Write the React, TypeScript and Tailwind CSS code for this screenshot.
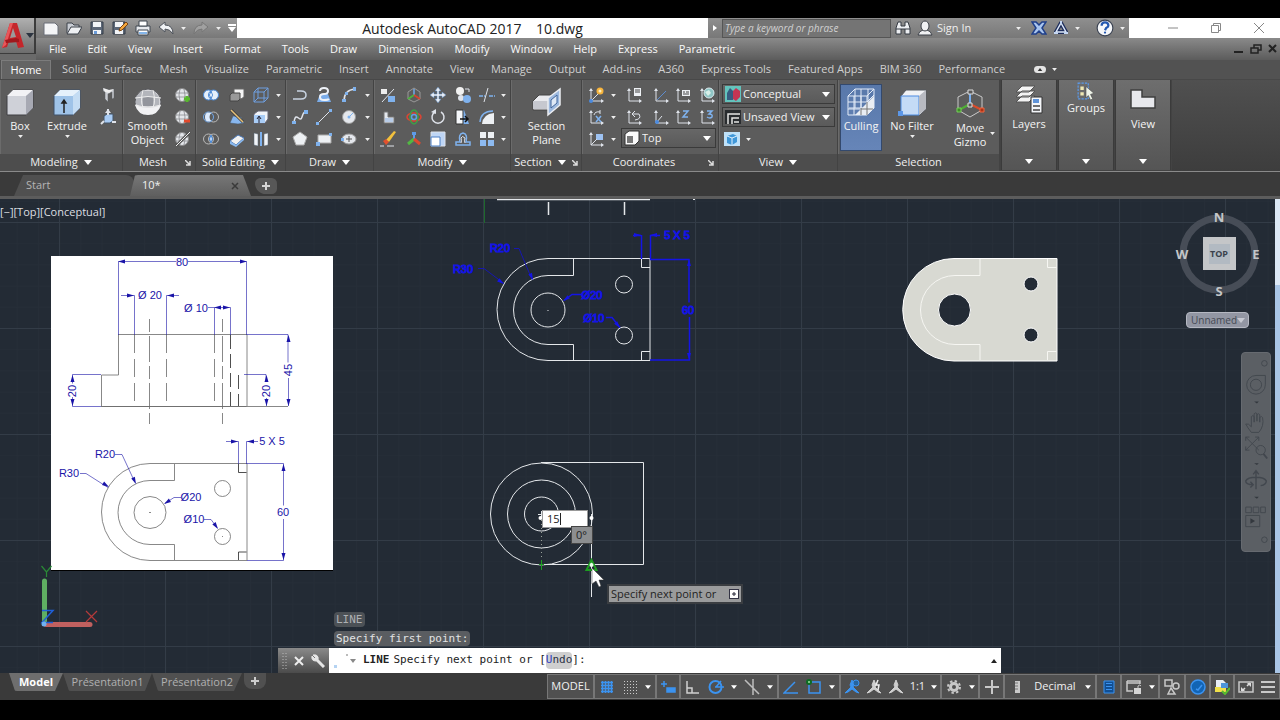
import type { ReactNode } from "react";

const light = "#dfe3ea";
const blue = "#7fb2ee";
const glow = "#3b93f0";

const axes = (
  <>
    <path d="M3 2v12h12" fill="none" stroke={light} />
    <path d="M1 4l2-3 2 3zM13 12l3 2-3 2z" fill={light} />
  </>
);

const sphere = (
  <>
    <circle cx="7" cy="8" r="6.500" fill="#e4e6ea" stroke="#8a8a8a" />
    <path d="M1 6h12M1 10h12M5 2q-2 6 0 12M9 2q2 6 0 12" fill="none" stroke="#8b8d92" strokeWidth=".8" />
  </>
);

const person = (color: string) => (
  <path d="M8 1l2 5-1 2 6 6-3-1-4-3-4 3-3 1 6-6-1-2z" fill={color} stroke={color} />
);

const icons: Record<string, ReactNode> = {
  newFile: <path d="M1 3h11l3 3v9H1z" fill="#f4f5f7" stroke="#6b6f78" />,
  open: (
    <>
      <path d="M1 13V3h5l2 2h5v3" fill="#c9cdd4" stroke="#3d424b" />
      <path d="M1 14l4-7h11l-4 7z" fill="#eef0f3" stroke="#3d424b" />
    </>
  ),
  save: (
    <>
      <path d="M2 2h12v12H2z" fill="#5d6878" stroke="#343c48" />
      <path d="M4 2h8v5H4zM4 10h8v4H4z" fill="#f2f4f7" />
      <path d="M5 11h3v3H5z" fill="#6a9bd8" />
    </>
  ),
  saveAs: (
    <>
      <path d="M1 2h12v12H1z" fill="#5d6878" stroke="#343c48" />
      <path d="M3 2h8v5H3zM3 10h8v4H3z" fill="#f2f4f7" />
      <path d="M7 11l1-3 6-6 2 2-6 6z" fill="#f3a63c" stroke="#7a4413" />
    </>
  ),
  print: (
    <>
      <path d="M1 6h14v6H1z" fill="#e8eaee" stroke="#3f4650" />
      <path d="M4 1h8v5H4zM3 10h10v5H3z" fill="#fff" stroke="#3f4650" />
      <path d="M4 12h8v2H4z" fill="#85b6ea" />
    </>
  ),
  undo: <path d="M1 7l6-5v3q8 0 8 9-3-5-8-5v3z" fill="#f0f2f5" stroke="#50555d" />,
  redo: <path d="M15 7L9 2v3q-8 0-8 9 3-5 8-5v3z" fill="#a0a0a0" stroke="#777" />,
  binoculars: (
    <>
      <path d="M3 2h3v4h4V2h3l2 6v6h-5V9H6v5H1V8z" fill="#eceef1" stroke="#353a42" />
      <path d="M1 9h5M10 9h5" stroke="#353a42" />
    </>
  ),
  user: (
    <>
      <path d="M1 15q1-4 5-5h4q4 1 5 5z" fill="#f0f1f3" stroke="#3c4048" />
      <ellipse cx="8" cy="6" rx="4" ry="5" fill="#f0f1f3" stroke="#3c4048" />
    </>
  ),
  exchange: <path d="M1 2h4l3 3 3-3h4l-4 6 4 6h-4l-3-3-3 3H1l4-6z" fill="#a9c5ef" stroke="#1f3f8a" strokeWidth="1.500" />,
  a360: (
    <>
      <path d="M8 3l5 9H3z" fill="none" stroke="#1d2d5c" strokeWidth="4" strokeLinejoin="round" />
      <path d="M8 3l5 9H3z" fill="none" stroke="#dce7f8" strokeWidth="1.500" />
      <path d="M1 13h4M11 13h4M8 1v3" stroke="#c3d6f3" strokeWidth="2" />
    </>
  ),
  help: (
    <>
      <circle cx="8" cy="8" r="7" fill="#f5f7fa" stroke="#3a4252" />
      <path d="M5 6q0-3 3-3t3 3q0 1-2 2l-1 2" fill="none" stroke="#2458b0" strokeWidth="2" />
      <circle cx="8" cy="12" r="1" fill="#2458b0" />
    </>
  ),
  polysolid: (
    <>
      <path d="M3 1l6 2 5-1v9l-2 1V5L8 7v8l-3-3V5L3 4z" fill="#c9ccd1" stroke="#55585d" strokeWidth=".5" />
      <path d="M3 1l6 2 5-1-5 4-4-1z" fill="#eee" />
    </>
  ),
  presspull: (
    <>
      <path d="M4 7l3-2h6v7l-3 2H4z" fill="#a8cbf4" stroke="#456" />
      <path d="M8 0v6M1 15l3-3M12 13h4" stroke={light} strokeWidth="2" />
      <path d="M5 4l3-4 3 4z" fill={light} />
    </>
  ),
  smoothMore: <>{sphere}<path d="M12 9v6M9 12h6" stroke="#57b92c" strokeWidth="3" /></>,
  smoothLess: <>{sphere}<path d="M9 12h6" stroke="#e2492c" strokeWidth="3" /></>,
  refine: <>{sphere}<path d="M1 15L15 1" stroke="#555" strokeWidth="3" /><path d="M1 15L15 1" stroke="#eee" /></>,
  union: (
    <>
      <circle cx="5.500" cy="8" r="5" fill="#e5effb" stroke="#4787d6" />
      <circle cx="10.500" cy="8" r="5" fill="#e5effb" stroke="#4787d6" />
      <path d="M8 4q-3 4 0 8 3-4 0-8" fill="#fff" stroke="#4787d6" />
    </>
  ),
  subtract: (
    <>
      <circle cx="10.500" cy="8" r="5" fill="none" stroke="#bbb" />
      <circle cx="5.500" cy="8" r="5" fill="none" stroke="#6fa8ec" />
      <path d="M8 4q-3 4 0 8-6 2-6-4t6-4" fill="#dcebff" />
    </>
  ),
  intersect: (
    <>
      <circle cx="5.500" cy="8" r="5" fill="none" stroke="#bbb" />
      <circle cx="10.500" cy="8" r="5" fill="none" stroke="#bbb" />
      <path d="M8 4q-3 4 0 8 3-4 0-8" fill="#d2e5ff" stroke="#4787d6" />
    </>
  ),
  interfere: (
    <>
      <path d="M5 2h10v8l-3 2H5z" fill="#f5f5f5" stroke="#666" />
      <path d="M1 8l2-2h8v6l-2 2H1z" fill="#999" stroke="#444" />
    </>
  ),
  slice: (
    <>
      <path d="M1 14l3-7 8 1 3 6-6 1z" fill="#88b7ef" stroke="#456" strokeWidth=".5" />
      <path d="M2 1l12 12" stroke="#3b3b3b" strokeWidth="3" />
      <path d="M2 1l12 12" stroke="#e8c27a" strokeWidth="1.500" />
    </>
  ),
  thicken: (
    <>
      <path d="M1 10l8-6 6 3-8 7z" fill="#f2f2f2" stroke="#4b78b5" />
      <path d="M1 10v3l6 3 8-7V7l-8 7z" fill="#8abaf1" />
    </>
  ),
  wireCube: <path d="M1 5h10v10H1zM5 1h10v10H5zM1 5l4-4M11 5l4-4M1 15l4-4M11 15l4-4" fill="none" stroke="#6f9fe0" />,
  faceCube: (
    <>
      <path d="M1 5l4-3h10v8l-3 4H1z" fill="#f1f4f8" stroke="#667" />
      <path d="M1 6h11v8H1z" fill="#a9cdf7" />
      <path d="M6 14V8M4 10l2-3 2 3" fill="none" stroke="#223" />
    </>
  ),
  mirror3d: (
    <>
      <path d="M1 2l4 1v12l-4-1zM15 2l-4 1v12l4-1z" fill="#f2f5f9" stroke="#567" strokeWidth=".5" />
      <path d="M8 1v14" stroke={blue} strokeWidth="2" />
    </>
  ),
  polyline: <path d="M1 12h8q5 0 5-4t-5-4H5M1 12h4" fill="none" stroke="#c9d4e2" strokeWidth="1.500" />,
  helix: (
    <>
      <path d="M4 7h8l3 8H1z" fill="#7badea" />
      <path d="M4 4q0-3 4-3t4 3-4 3-4 3 4 3 5-1" fill="none" stroke="#eef2f8" strokeWidth="2" />
    </>
  ),
  arc: (
    <>
      <path d="M3 14Q3 3 14 2" fill="none" stroke={light} strokeWidth="1.500" />
      <path d="M1 12h4v3H1zM12 0h3v4h-3zM4 5h3v3H4z" fill={blue} />
    </>
  ),
  spline: (
    <>
      <path d="M2 13C4 1 8 15 10 8S13 4 14 3" fill="none" stroke={light} strokeWidth="1.500" />
      <path d="M0 12h4v3H0zM12 1h4v4h-4z" fill={blue} />
    </>
  ),
  line: <><path d="M2 14L14 2" stroke={light} /><path d="M0 13h3v3H0zM13 0h3v3h-3z" fill={blue} /></>,
  circle: <><circle cx="8" cy="8" r="6.500" fill="#e4e7ec" stroke="#999" /><path d="M8 8l4-4" stroke={blue} /><circle cx="8" cy="8" r="1.500" fill={blue} /></>,
  polygon: <path d="M8 1l7 5-3 8H4L1 6z" fill="#edf0f3" stroke="#aaa" />,
  rectangle: <><path d="M2 4h13v8H2z" fill="#edf0f3" stroke="#aaa" /><path d="M0 11h4v4H0zM13 2h3v3h-3z" fill={blue} /></>,
  ellipse: <><ellipse cx="8" cy="8" rx="7" ry="5" fill="#e4e7ec" stroke="#999" /><path d="M5 8h6M8 5v6" stroke="#555" /><path d="M0 7h3v3H0z" fill={blue} /></>,
  align: <><path d="M1 2h6v5H1z" fill="#eee" /><path d="M2 15L14 2" stroke={light} /><path d="M8 9h7v6H8z" fill={blue} /></>,
  gizmo: <><path d="M8 1l6 4v7l-6 3-6-3V5z" fill="none" stroke="#999" /><path d="M8 2v6" stroke="#6fa8ec" strokeWidth="1.500" /><path d="M8 8l-6 4" stroke="#4db33c" strokeWidth="2" /><path d="M8 8l6 4" stroke="#d3452e" strokeWidth="2" /></>,
  move: <path d="M8 0l3 4H9v3h3V5l4 3-4 3V9H9v3h2l-3 4-3-4h2V9H4v2L0 8l4-3v2h3V4H5z" fill="#e7ecf4" stroke="#5684bb" strokeWidth=".5" />,
  copy: <><circle cx="5" cy="4" r="4" fill="#f2f2f2" /><circle cx="6" cy="11" r="3" fill={light} /><circle cx="12" cy="12" r="4" fill={blue} /><path d="M10 2h4v3" fill="none" stroke={light} /></>,
  trim: <><path d="M0 9h6M10 9h6" stroke={blue} strokeWidth="1.500" strokeDasharray="4 1" /><path d="M5 15L9 1" stroke={light} /></>,
  lShape: <><path d="M4 3h4v5h6v6H4z" fill="#e4e8ee" stroke="#777" /><path d="M5 9h8v4H5z" fill="#b8cce8" /></>,
  rotate3d: <><ellipse cx="8" cy="8" rx="7" ry="4" fill="none" stroke="#df4432" strokeWidth="1.500" /><ellipse cx="8" cy="8" rx="4" ry="7" fill="none" stroke="#3f9e46" strokeWidth="1.500" /><circle cx="8" cy="8" r="2.500" fill="none" stroke="#619ee3" strokeWidth="1.500" /></>,
  rotate: <><path d="M5 3a6 6 0 1 0 6 0" fill="none" stroke={light} strokeWidth="1.500" /><path d="M6 0v5l-5-2z" fill={light} /></>,
  stretch: <><path d="M1 1h8l5 14H1z" fill={blue} /><path d="M1 1h7v14H1z" fill="#f5f7fa" stroke="#333" /><path d="M5 10h7M10 7l3 3-3 3" fill="none" stroke="#111" strokeWidth="1.500" /></>,
  fillet: <><path d="M3 15Q4 5 15 4v11z" fill="#edf0f3" /><path d="M1 13Q2 2 14 2" fill="none" stroke={blue} strokeWidth="1.500" /></>,
  erase: <><path d="M6 9l8-9 2 1-7 10z" fill="#f2c13d" /><path d="M3 10l3-2 3 3-3 3z" fill="#e2512e" /><path d="M0 15h4M7 15h7" stroke={light} /></>,
  scale3d: <><path d="M8 8V3" stroke="#5e9be8" strokeWidth="2" /><path d="M8 8l-6 5" stroke="#52b843" strokeWidth="3" /><path d="M8 8l6 5" stroke="#dc4930" strokeWidth="3" /><path d="M6 1h4v3H6z" fill="#5e9be8" /></>,
  scale: <><path d="M1 1h14v14H1z" fill="#bfd6f5" stroke={light} /><path d="M1 6h9v9H1z" fill="#fff" stroke="#4a7ec4" /></>,
  offset: <><path d="M1 14h14v-3h-4q2-8-3-9-5 1-3 9H1z" fill="none" stroke={blue} strokeWidth="1.500" /><path d="M6 12q1-2 0-5 1-3 4 0-1 3 0 5" fill="none" stroke={light} /></>,
  array: <><path d="M1 1h6v6H1zM9 1h6v6H9z" fill="#edf0f4" /><path d="M1 9h6v6H1zM9 9h6v6H9z" fill="#8dbaf0" /></>,
  ucs: <>{axes}<path d="M3 14l8-8" stroke={light} /><circle cx="12" cy="4" r="3.500" fill="#f7b43c" /><circle cx="12" cy="4" r="1.500" fill="#fff1c0" /><circle cx="3" cy="14" r="2" fill="#4b8be0" /></>,
  ucsWorldX: <>{axes}<path d="M6 6q1-4 6-3M12 1v4" fill="none" stroke={light} /><path d="M8 7l5 6M13 7l-5 6" stroke={blue} strokeWidth="1.500" /></>,
  ucsView: <>{axes}<path d="M8 3h7v6H8z" fill="#9dc2f2" /><path d="M3 14l6-6" stroke={light} /></>,
  ucsNamed: <>{axes}<path d="M8 1h7v8H8z" fill="#eef1f5" /><path d="M9 3h5M9 5h5" stroke="#444" /></>,
  ucsPrev: <>{axes}<path d="M7 5h6q3 5-4 6M9 2L6 5l3 3" fill="none" stroke={light} /></>,
  ucsOrigin: <>{axes}<path d="M4 13l9-9" stroke="#5d8dd0" /></>,
  ucsObject: <>{axes}<path d="M7 3h8v6H7z" fill="#edf0f4" /><path d="M8 5h2M11 5h3M8 7h6" stroke="#444" /></>,
  ucsGlobe: <>{axes}<circle cx="10" cy="6" r="5" fill="#8fc6c5" stroke="#dbe9ee" /><path d="M6 5l4-2 2 3-3 3z" fill="#d8efe9" /></>,
  ucsFace: <>{axes}<path d="M3 14l6-7" stroke={light} /><circle cx="4" cy="13" r="2" fill="#4b8be0" /></>,
  ucsZ: <>{axes}<path d="M8 2h5l-5 6h5" fill="none" stroke={blue} strokeWidth="1.500" /></>,
  ucs3: <>{axes}<path d="M8 2h5L10 5q4 0 3 3-2 2-5 0" fill="none" stroke={blue} strokeWidth="1.500" /></>,
  smallCube: <><path d="M1 4l4-3h10v10l-4 4H1z" fill="#fafafa" stroke="#333" /><path d="M3 6h6v7H3z" fill="#777" /></>,
  conceptual: <><path d="M0 0h16v16H0z" fill="#63c3bd" /><path d="M2 7l3-5 3 3v9H2z" fill="#375b80" /><path d="M8 5l3-3 4 3v6l-4 4-3-2z" fill="#c43454" /></>,
  namedView: <><path d="M0 1h16v14H0z" fill="#292c2f" /><path d="M3 15V5h12M7 15V9h7M9 13h5" fill="none" stroke="#e5e5e5" strokeWidth="1.500" /></>,
  viewCube: <><path d="M0 1h16v14H0z" fill="#bfe2fa" /><path d="M3 5l6-2 4 2v6l-5 3-5-2z" fill="#3f97d8" /><path d="M3 5l5 2 5-2M8 7v7" fill="none" stroke="#dff1ff" /></>,
  groups: <><path d="M1 1h9v14H1z" fill="none" stroke="#5a9cf0" strokeDasharray="2 1" /><path d="M3 4h3v3H3zM3 9h3v3H3z" fill="#efe9b4" /><path d="M8 4l7 6-3 1 2 4-2 1-2-4-2 2z" fill="#eef3e8" stroke="#444" strokeWidth=".5" /></>,
  gridOn: <path d="M2 3.500h12M2 6.500h12M2 9.500h12M2 12.500h12M3.500 2v12M6.500 2v12M9.500 2v12M12.500 2v12" stroke={glow} strokeWidth="1.500" />,
  snap: <path d="M2 2.500h13M2 5.500h13M2 8.500h13M2 11.500h13M2 14.500h13" stroke="#ccc" strokeDasharray="1 2" />,
  dynInput: <path d="M4 2v6M1 5h6M7 9h8v4H7z" fill={glow} stroke={glow} strokeWidth="1.500" />,
  ortho: <path d="M2 2v12h12M2 9h5v5" fill="none" stroke="#d0d0d0" strokeWidth="1.500" />,
  polar: <><circle cx="7.500" cy="8" r="6" fill="none" stroke={glow} strokeWidth="2" /><path d="M7 8h9M8 8l5-6" stroke={glow} strokeWidth="1.500" /></>,
  iso: <path d="M9 0v16M1 1l14 14" stroke="#bdbdbd" strokeWidth="1.500" />,
  track: <path d="M15 14H1L12 3" fill="none" stroke={glow} strokeWidth="1.500" />,
  osnap: <><path d="M3 3h11v11H3z" fill="none" stroke={glow} strokeWidth="1.500" /><circle cx="3" cy="3" r="3" fill="#0d6b22" /><circle cx="3" cy="3" r="1" fill="#9ee39e" /></>,
  annoOn: <>{person(glow)}<circle cx="12" cy="4" r="3" fill="#27649f" stroke={glow} /></>,
  annoAuto: <>{person("#cfcfcf")}<path d="M12 1l-2 5h3l-1 5" fill="none" stroke="#eee" strokeWidth="1.500" /></>,
  anno: person("#cfcfcf"),
  gear: <><circle cx="8" cy="8" r="3.500" fill="none" stroke="#c8c8c8" strokeWidth="3" /><circle cx="8" cy="8" r="6" fill="none" stroke="#c8c8c8" strokeWidth="2" strokeDasharray="2.400 2.300" /></>,
  plus: <path d="M8 1v14M1 8h14" stroke="#c8c8c8" strokeWidth="2" />,
  ruler: <><path d="M6 2h5v12H6z" fill="#c9c9c9" /><path d="M6 4h3M6 7h3M6 10h3" stroke="#777" /></>,
  calc: <><path d="M3 2h10v12H3z" fill="#114f93" stroke={glow} /><path d="M5 4.500h6M5 7.500h6M5 10.500h6" stroke={glow} /></>,
  lockUi: <><path d="M1 2h13v3M1 2v10h6M1 4h13" fill="none" stroke="#c8c8c8" strokeWidth="1.500" /><path d="M8 9h7v6H8z" fill="#d5d5d5" /><path d="M12 9V7q2-2 3 0" fill="none" stroke="#c8c8c8" /></>,
  isolate: <><path d="M1 1h7v6H1zM7 9l4 6H4z" fill="none" stroke="#c8c8c8" strokeWidth="1.500" /><circle cx="12" cy="7" r="3" fill="none" stroke="#c8c8c8" strokeWidth="1.500" /></>,
  hardware: <><circle cx="8" cy="8" r="7" fill="#1264b4" stroke={glow} strokeWidth="1.500" /><path d="M6 10l2 1 4-5" fill="none" stroke={glow} strokeWidth="1.500" /></>,
  trust: <><path d="M2 1h7l3 3v5H2z" fill="#e8eef5" /><path d="M1 8h11v5H1z" fill="#f0e04a" /><path d="M7 4h7v5H7z" fill="#4d94db" /><path d="M8 12l3 3 5-6" fill="none" stroke="#58bd2e" strokeWidth="2" /></>,
  fullscreen: <><path d="M1 3h14v10H1z" fill="none" stroke="#c8c8c8" strokeWidth="1.500" /><path d="M13 4v4L9 4zM3 12V8l4 4z" fill="#ddd" /><path d="M9 7l3-3M4 12l3-3" stroke="#ddd" strokeWidth="1.500" /></>,
  burger: <path d="M1 3h14M1 8h14M1 13h14" stroke="#c8c8c8" strokeWidth="2" />,
};

function Icon({ name, big }: { name: string; big?: boolean }) {
  return (
    <svg viewBox="0 0 16 16" className={big ? "size-[18px] shrink-0" : "size-4 shrink-0"} aria-hidden="true">
      {icons[name]}
    </svg>
  );
}

function Caret({ className = "text-white" }: { className?: string }) {
  return (
    <svg viewBox="0 0 8 5" className={`h-[5px] w-2 shrink-0 ${className}`} aria-hidden="true">
      <path d="M0 0h8L4 5z" fill="currentColor" />
    </svg>
  );
}

function SmallCaret() {
  return (
    <svg viewBox="0 0 8 5" className="h-[3px] w-[5px] shrink-0" aria-hidden="true">
      <path d="M0 0h8L4 5z" fill="#eee" />
    </svg>
  );
}

function Tool({ name }: { name: string }) {
  return (
    <button className="flex items-center justify-center" aria-label={name}>
      {name === "more" ? <SmallCaret /> : <Icon name={name} />}
    </button>
  );
}

function Panel({ title, width, caret, launcher, children }: { title: string; width: string; caret?: boolean; launcher?: boolean; children: ReactNode }) {
  return (
    <section className={`flex h-full shrink-0 flex-col border-r border-[#434343] ${width}`}>
      <div className="flex h-[74px] border-l border-[#6b6b6b]">{children}</div>
      <div className="flex h-[17px] items-center justify-center gap-1.5 bg-[#4d4d4d] px-1 text-[11px] text-[#efefef]">
        <span className={launcher ? "ml-auto" : ""}>{title}</span>
        {caret && <Caret />}
        {launcher && (
          <button className="ml-auto" aria-label={`${title} settings`}>
            <svg viewBox="0 0 6 6" className="size-1.5">
              <path d="M0 0l5 5M5 1v4H1" fill="none" stroke="#ddd" strokeWidth="1.500" />
            </svg>
          </button>
        )}
      </div>
    </section>
  );
}

function BigButton({ label, width, active, caret, children }: { label: string; width: string; active?: boolean; caret?: boolean; children: ReactNode }) {
  return (
    <button
      className={`mt-1 flex h-[67px] shrink-0 flex-col items-center border pt-0.5 text-[11px] leading-[14px] text-[#f4f4f4] ${width} ${active ? "border-[#33496d] bg-linear-to-b from-[#5878aa] to-[#6685b8]" : "border-transparent"}`}
    >
      <svg viewBox="0 0 30 30" className="mb-0.5 size-[30px] shrink-0" aria-hidden="true">
        {children}
      </svg>
      <span className="whitespace-pre-line">{label}</span>
      {caret && <span className="mt-0.5 flex"><SmallCaret /></span>}
    </button>
  );
}

function DropDown({ icon, label, value }: { icon: string; label: string; value: string }) {
  return (
    <label className="relative flex h-5 w-full items-center gap-0.5 border border-[#3a3a3a] bg-linear-to-b from-[#676767] to-[#5a5a5a] pl-0.5">
      <Icon name={icon} />
      <select aria-label={label} className="h-full min-w-0 flex-1 appearance-none bg-transparent text-[11px] text-[#f2f2f2] outline-none">
        <option>{value}</option>
      </select>
      <span className="flex w-3"><Caret /></span>
    </label>
  );
}

function SlidePanel({ label, width, children }: { label: string; width: string; children: ReactNode }) {
  return (
    <button className={`mr-px flex h-[90px] shrink-0 flex-col items-center border-x border-[#3b3b3b] bg-linear-to-b from-[#6e6e6e] to-[#555] pb-1.5 text-[11px] leading-[15px] text-[#f4f4f4] ${width}`}>
      {children}
      <span>{label}</span>
      <span className="mt-auto flex"><Caret /></span>
    </button>
  );
}

const menus = ["File", "Edit", "View", "Insert", "Format", "Tools", "Draw", "Dimension", "Modify", "Window", "Help", "Express", "Parametric"];
const tabs = ["Solid", "Surface", "Mesh", "Visualize", "Parametric", "Insert", "Annotate", "View", "Manage", "Output", "Add-ins", "A360", "Express Tools", "Featured Apps", "BIM 360", "Performance"];

function TitleBar() {
  return (
    <header className="flex bg-[#6a6a6a]">
      <button aria-label="Application menu" className="flex h-9 w-9 shrink-0 items-center border-r-2 border-b border-[#3c3c3c] bg-linear-to-b from-[#b0b0b0] to-[#6d6d6d] pl-0.5">
        <svg viewBox="0 0 24 26" className="h-[26px] w-6">
          <path d="M8 0h7l7 24-6 1-2-7H7l-2 6-5 1z" fill="#c4262b" />
          <path d="M11 5l3 9-6 1z" fill="#9b9b9b" />
          <path d="M8 0h3L4 22l-4 3z" fill="#e8575a" />
          <path d="M3 17l11-2 3 1v3l-13 1z" fill="#a0181d" />
        </svg>
        <Caret className="text-[#2c3440]" />
      </button>
      <div className="min-w-0 flex-1">
        <div className="flex h-5">
          <div className="flex w-[201px] shrink-0 items-center gap-[7px] bg-linear-to-b from-[#9a9a9a] to-[#787878] pl-[7px]">
            {["newFile", "open", "save", "saveAs", "print", "undo"].map((n) => (
              <button key={n} aria-label={n}><Icon name={n} /></button>
            ))}
            <SmallCaret />
            <button aria-label="redo"><Icon name="redo" /></button>
            <SmallCaret />
            <button aria-label="Customize toolbar">
              <svg viewBox="0 0 8 8" className="size-2"><path d="M0 0h8v2H0zM0 3h8L4 8z" fill="#fff" /></svg>
            </button>
          </div>
          <h1 className="flex flex-1 items-center justify-center bg-white text-[14px] whitespace-pre text-[#222]">
            {"Autodesk AutoCAD 2017    10.dwg"}
          </h1>
          <div className="flex w-[421px] shrink-0 items-center bg-linear-to-b from-[#8f8f8f] to-[#787878]">
            <button aria-label="Collapse search" className="flex w-3.5 justify-center">
              <svg viewBox="0 0 4 6" className="h-1.5 w-1"><path d="M0 0l4 3-4 3z" fill="#fff" /></svg>
            </button>
            <input aria-label="Search" placeholder="Type a keyword or phrase" className="h-[19px] w-[169px] border border-[#555] bg-[#747474] px-0.5 text-[10px] italic outline-none placeholder:text-[#d0d0d0]" />
            <button aria-label="Search help" className="ml-1"><Icon name="binoculars" /></button>
            <button className="ml-1.5 flex items-center gap-1 text-[11px] text-[#efefef]"><Icon name="user" />Sign In</button>
            <span className="ml-auto"><SmallCaret /></span>
            <button aria-label="Exchange" className="ml-2.5"><Icon name="exchange" /></button>
            <button aria-label="A360" className="mx-1.5"><Icon name="a360" /></button>
            <SmallCaret />
            <button aria-label="Help" className="ml-4"><Icon name="help" big /></button>
            <span className="mr-1 ml-1.5"><SmallCaret /></span>
          </div>
          <div className="flex w-[151px] shrink-0 items-center justify-end gap-[33px] bg-white pr-4">
            <button aria-label="Minimize"><svg viewBox="0 0 10 10" className="size-2.5"><path d="M0 5h10" stroke="#888" /></svg></button>
            <button aria-label="Restore"><svg viewBox="0 0 10 10" className="size-2.5"><path d="M.5 2.500h7v7h-7zM2.500 2V.5h7v7H8" fill="none" stroke="#888" /></svg></button>
            <button aria-label="Close"><svg viewBox="0 0 10 10" className="size-2.5"><path d="M0 0l10 10M10 0L0 10" stroke="#888" /></svg></button>
          </div>
        </div>
        <nav className="flex h-[22px] items-center gap-[21px] bg-linear-to-b from-[#8a8a8a] to-[#5c5c5c] pl-[13px] text-[11px] text-[#fafafa]">
          {menus.map((m) => (
            <button key={m}>{m}</button>
          ))}
          <span className="mr-0.5 ml-auto flex items-center gap-1.5">
            <button aria-label="Minimize drawing"><svg viewBox="0 0 10 10" className="size-2.5"><path d="M0 8h9" stroke="#222" strokeWidth="2" /></svg></button>
            <button aria-label="Restore drawing"><svg viewBox="0 0 12 10" className="h-2.5 w-3"><path d="M1 4h7v5H1zM4 4V1h7v5H8" fill="none" stroke="#222" strokeWidth="1.500" /></svg></button>
            <button aria-label="Close drawing"><svg viewBox="0 0 10 10" className="size-2.5"><path d="M1 1l7 7M8 1L1 8" stroke="#222" strokeWidth="2" /></svg></button>
          </span>
        </nav>
      </div>
    </header>
  );
}

function Ribbon() {
  return (
    <>
      <nav className="flex h-[19px] items-center gap-[17px] bg-[#525252] text-[11px] text-[#d0d0d0]">
        <button className="-mr-1.5 ml-px h-full w-[50px] border border-b-0 border-[#7c7c7c] bg-[#646464] text-white">Home</button>
        {tabs.map((t) => (
          <button key={t} className="whitespace-nowrap">{t}</button>
        ))}
        <button aria-label="Minimize ribbon" className="ml-3 flex items-center gap-1.5">
          <span className="flex h-[7px] w-3 items-center justify-center rounded-sm bg-[#e4e4e4]">
            <svg viewBox="0 0 6 4" className="h-[3px] w-1.5"><path d="M0 4h6L3 0z" fill="#333" /></svg>
          </span>
          <SmallCaret />
        </button>
      </nav>
      <div className="flex h-[93px] overflow-hidden border-t border-b border-t-[#484848] border-b-[#8a8a8a] bg-[#434343]">
        <div className="flex shrink-0 bg-[#5c5c5c]">
          <Panel title="Modeling" width="w-[123px]" caret>
            <BigButton label="Box" width="w-[38px]" caret>
              <path d="M2 9l6-6h20v18l-7 7H2z" fill="#cfd1d8" stroke="#3f3f42" />
              <path d="M2 9l6-6h20l-7 6z" fill="#f2f2f5" />
              <path d="M21 9l7-6v18l-7 7z" fill="#a7a9b3" />
            </BigButton>
            <BigButton label="Extrude" width="w-[56px]" caret>
              <path d="M2 9l6-6h20v18l-7 7H2z" fill="#9fc3e8" stroke="#3f5168" />
              <path d="M2 9l6-6h20l-7 6z" fill="#e6f1fb" />
              <path d="M21 9l7-6v18l-7 7z" fill="#c4dcf3" />
              <path d="M12 26V14M10 16l2-3 2 3z" fill="#222" stroke="#222" strokeWidth="1.500" />
            </BigButton>
            <div className="grid w-[26px] auto-rows-[22px] justify-center pt-1">
              <Tool name="polysolid" />
              <Tool name="presspull" />
            </div>
          </Panel>
          <Panel title="Mesh" width="w-[73px]" launcher>
            <BigButton label={"Smooth\nObject"} width="w-[47px]">
              <circle cx="15" cy="15" r="13" fill="#d6d6da" stroke="#55565a" />
              <path d="M8 4h13l5 6v8l-4 2H8l-5-3V10z" fill="#b3b5bb" />
              <path d="M10 10h10v9H10z" fill="#93959c" />
              <path d="M2 18q13 6 26 0-3 10-13 10T2 18" fill="#f2f2f4" />
              <path d="M2 11q13-3 26 0M2 18q13 4 26 0M10 3q-3 12 0 17M20 3q3 12 0 17" fill="none" stroke="#eee" />
            </BigButton>
            <div className="grid w-[24px] auto-rows-[22px] justify-center pt-1">
              <Tool name="smoothMore" />
              <Tool name="smoothLess" />
              <Tool name="refine" />
            </div>
          </Panel>
          <Panel title="Solid Editing" width="w-[90px]" caret>
            <div className="grid auto-rows-[22px] grid-cols-[28px_24px_24px_10px] pt-1">
              {["union", "interfere", "wireCube", "more", "subtract", "slice", "faceCube", "more", "intersect", "thicken", "mirror3d", "more"].map((n, i) => (
                <Tool key={i} name={n} />
              ))}
            </div>
          </Panel>
          <Panel title="Draw" width="w-[88px]" caret>
            <div className="grid auto-rows-[22px] grid-cols-[26px_22px_28px_8px] pt-1">
              {["polyline", "helix", "arc", "more", "spline", "line", "circle", "more", "polygon", "rectangle", "ellipse", "more"].map((n, i) => (
                <Tool key={i} name={n} />
              ))}
            </div>
          </Panel>
          <Panel title="Modify" width="w-[137px]" caret>
            <div className="grid auto-rows-[22px] grid-cols-[26px_26px_22px_28px_20px_12px] pt-1">
              {["align", "gizmo", "move", "copy", "trim", "more", "lShape", "rotate3d", "rotate", "stretch", "fillet", "more", "erase", "scale3d", "scale", "offset", "array", "more"].map((n, i) => (
                <Tool key={i} name={n} />
              ))}
            </div>
          </Panel>
          <Panel title="Section" width="w-[71px]" caret launcher>
            <BigButton label={"Section\nPlane"} width="w-full">
              <path d="M1 14l6-6h14v11l-5 4H1z" fill="#e9eaee" stroke="#444" />
              <path d="M1 14h15v8H1z" fill="#c6c8cf" />
              <path d="M16 11l12-9v16l-12 10z" fill="#9db9de" stroke="#eceef2" strokeWidth="1.500" />
              <path d="M19 13l6-5v8l-6 5z" fill="#dfe9f6" stroke="#41669c" />
            </BigButton>
          </Panel>
          <Panel title="Coordinates" width="w-[137px]" launcher>
            <div className="grid auto-rows-[22px] grid-cols-[26px_8px] pt-1">
              {["ucs", "more", "ucsWorldX", "more", "ucsView", "more"].map((n, i) => (
                <Tool key={i} name={n} />
              ))}
            </div>
            <div className="flex flex-col pt-1">
              <div className="grid auto-rows-[22px] grid-cols-[34px_20px_24px_24px]">
                {["ucsNamed", "ucsOrigin", "ucsObject", "ucsGlobe", "ucsPrev", "ucsFace", "ucsZ", "ucs3"].map((n) => (
                  <Tool key={n} name={n} />
                ))}
              </div>
              <div className="ml-1 w-[95px]"><DropDown icon="smallCube" label="Named UCS" value="Top" /></div>
            </div>
          </Panel>
          <Panel title="View" width="w-[119px]" caret>
            <div className="flex w-full flex-col gap-[3px] px-0.5 pt-1">
              <DropDown icon="conceptual" label="Visual style" value="Conceptual" />
              <DropDown icon="namedView" label="Named view" value="Unsaved View" />
              <button aria-label="View manager" className="flex items-center gap-1.5 pt-px pl-0.5">
                <Icon name="viewCube" />
                <SmallCaret />
              </button>
            </div>
          </Panel>
          <Panel title="Selection" width="w-[162px]">
            <div className="flex gap-0.5 pl-px">
              <BigButton label="Culling" width="w-[42px]" active>
                <path d="M2 9l7-7h19v19l-7 7H2zM2 9h19v19M21 9l7-7M8 9v19M15 9v19M2 15h19l7-7M2 22h19l7-7M9 2v19M15 2v19M22 2v19M3 21h25" fill="none" stroke="#e4ecf8" />
                <path d="M9 28L28 9v12l-7 7z" fill="#e9edf3" />
                <path d="M15 21v7M21 15v13M15 22h12" stroke="#777" />
              </BigButton>
              <BigButton label="No Filter" width="w-[56px]" caret>
                <path d="M4 9l5-6h20v19l-6 6H4z" fill="#f1f2f5" stroke="#55585f" />
                <path d="M4 9h18v19H4z" fill="#c4dbf6" stroke="#4c8be0" />
                <path d="M22 9l7-6v19l-7 6z" fill="#b8bac1" />
                <path d="M1 24h5v5H1z" fill="#5b97e8" />
              </BigButton>
              <div className="ml-1 flex items-center">
                <BigButton label={"Move\nGizmo"} width="w-[48px]">
                  <path d="M15 2l12 6v13l-12 7-12-7V8z" fill="none" stroke="#c9c9c9" />
                  <path d="M15 4v11" stroke="#77aef0" strokeWidth="2" />
                  <path d="M15 15L4 21" stroke="#4fae34" strokeWidth="2" />
                  <path d="M15 15l12 6" stroke="#db4b2a" strokeWidth="2" />
                  <path d="M13 1h5v4h-5zM13 14h4v4h-4z" fill="#595959" stroke="#ddd" />
                  <path d="M2 19h4v4H2z" fill="#3c8b26" stroke="#76d05a" />
                  <path d="M25 19h4v4h-4z" fill="#a93317" stroke="#f2673f" />
                </BigButton>
                <span className="-ml-1 pt-8"><SmallCaret /></span>
              </div>
            </div>
          </Panel>
        </div>
        <div className="flex shrink-0 pl-px">
          <SlidePanel label="Layers" width="w-[56px]">
            <svg viewBox="0 0 30 32" className="mt-1 h-8 w-[30px]">
              <path d="M2 18l6-6h13l-6 6zM2 13l6-6h13l-6 6zM2 8l6-6h13l-6 6z" fill="#f4f4f4" stroke="#555" />
              <path d="M17 13h11v16H17z" fill="#f4f6f9" stroke="#333" />
              <path d="M19 15h6v4h-6z" fill="#5f93d8" />
              <path d="M19 22h7M19 26h7" stroke="#444" strokeWidth="1.500" />
            </svg>
          </SlidePanel>
          <SlidePanel label="Groups" width="w-[56px]">
            <svg viewBox="0 0 16 16" className="mt-0.5 size-[18px]">{icons.groups}</svg>
          </SlidePanel>
          <SlidePanel label="View" width="w-[56px]">
            <svg viewBox="0 0 30 32" className="mt-1 h-8 w-[30px]">
              <path d="M3 6h11v7h13v11H3z" fill="#e7e8ec" stroke="#3f3f3f" strokeWidth="1.500" />
            </svg>
          </SlidePanel>
        </div>
        <div className="flex-1 bg-linear-to-b from-[#505050] to-[#3d3d3d]" />
      </div>
    </>
  );
}

function FileTabs() {
  return (
    <div className="flex h-[27px] items-end border-b-[3px] border-[#5c5c5c] bg-[#3a3a3a] pl-[14px] text-[11px]">
      <button className="h-[21px] w-[120px] rounded-t-lg bg-[#505050] pl-3 text-left text-[#b5b5b5] [clip-path:polygon(9px_0,100%_0,100%_100%,0_100%)]">Start</button>
      <div className="-ml-1 flex h-[21px] w-[121px] items-center justify-between rounded-t-lg bg-linear-to-b from-[#777] to-[#5f5f5f] px-3 text-[#f0f0f0] [clip-path:polygon(5px_0,113px_0,100%_100%,0_100%)]">
        <button>10*</button>
        <button aria-label="Close tab"><svg viewBox="0 0 8 8" className="size-2"><path d="M1 1l6 6M7 1L1 7" stroke="#3a3a3a" strokeWidth="1.500" /></svg></button>
      </div>
      <button aria-label="New drawing" className="mb-0.5 ml-1 flex h-4 w-[22px] items-center justify-center rounded-md rounded-bl-xl bg-[#575757]">
        <svg viewBox="0 0 8 8" className="size-2"><path d="M4 0v8M0 4h8" stroke="#d5d5d5" strokeWidth="2" /></svg>
      </button>
    </div>
  );
}

// Dimension arrowhead with its tip at (x, y), turned by `a` degrees from pointing right
function Arrow({ x, y, a, fill }: { x: number; y: number; a: number; fill: string }) {
  return <path d="M0 0l-7-2v4z" transform={`translate(${x} ${y}) rotate(${a})`} fill={fill} />;
}

function ReferenceSheet() {
  const c = "#1a14a8";
  return (
    <g fontFamily="Liberation Sans, Arial, sans-serif" fontSize="11">
      <path d="M51 256h282v314H51z" fill="#fff" />
      <path d="M51 570.500h282" stroke="#000" />
      <g fill="none" stroke="#6a6a6a" strokeWidth=".8">
        <path d="M118.500 335v40H101.500v31.500h145M118 334.500h129V406M101 406.500h187" />
        <path d="M134.500 335v71M166.500 335v71M214.500 335v71" strokeDasharray="18 6" />
        <path d="M149.500 319v105M222.500 319v105" strokeDasharray="13 4 26 4" />
        <path d="M230.500 335v71M238.500 375v31" stroke="#222" strokeDasharray="14 5" />
        <path d="M247 463.500h-97a48.500 48.500 0 0 0 0 97h97zM150 480.500a32 32 0 0 0 0 64M150 480.500h24.500V464M150 544.500h24.500V560" />
        <circle cx="150" cy="512.500" r="16" />
        <circle cx="222.500" cy="488.500" r="8" />
        <circle cx="222.500" cy="536.500" r="8" />
        <path d="M149 512.500h2M222 536.500h1" />
        <path d="M238.500 464v8.500h8M238.500 560v-8h8" stroke="#222" />
      </g>
      <g fill="none" stroke={c} strokeWidth=".6">
        <path d="M118.500 335V261.500h58M188 261.500h58.500V335M121 295.500h13.500V335M179 295.500h-12.500V335M208 307.500h22.500V335M214.500 308v27" />
        <path d="M247 334.500h41v28M288.500 378v28M244 374.500h22v7M266.500 398v8M101 374.500H72.500v9M72.500 397v9.500H101" />
        <path d="M226 441.500h12.500V464M258 441.500h-11.500V464M247 463.500h36.500v42M283.500 519v41.500H247" />
        <path d="M115 454.500h7l13 28M80 473.500h6l22 14M181 497.500h-7l-9 6M204 519.500h7l6 8" />
      </g>
      <Arrow x={118} y={261.5} a={180} fill={c} />
      <Arrow x={247} y={261.5} a={0} fill={c} />
      <Arrow x={134} y={295.5} a={0} fill={c} />
      <Arrow x={167} y={295.5} a={180} fill={c} />
      <Arrow x={214} y={307.5} a={180} fill={c} />
      <Arrow x={230} y={307.5} a={0} fill={c} />
      <Arrow x={288.5} y={335} a={-90} fill={c} />
      <Arrow x={288.5} y={406} a={90} fill={c} />
      <Arrow x={266.5} y={375} a={-90} fill={c} />
      <Arrow x={266.5} y={406} a={90} fill={c} />
      <Arrow x={72.5} y={375} a={-90} fill={c} />
      <Arrow x={72.5} y={406} a={90} fill={c} />
      <Arrow x={238} y={441.5} a={0} fill={c} />
      <Arrow x={247} y={441.5} a={180} fill={c} />
      <Arrow x={283.5} y={464} a={-90} fill={c} />
      <Arrow x={283.5} y={560} a={90} fill={c} />
      <Arrow x={136} y={484} a={65} fill={c} />
      <Arrow x={109} y={487} a={32} fill={c} />
      <Arrow x={164} y={504} a={148} fill={c} />
      <Arrow x={218} y={529} a={55} fill={c} />
      <g fill={c} textAnchor="middle">
        <text x="182" y="266">80</text>
        <text x="150" y="299">Ø 20</text>
        <text x="196" y="312">Ø 10</text>
        <text x="272" y="445">5 X 5</text>
        <text x="105" y="458">R20</text>
        <text x="69" y="477">R30</text>
        <text x="191" y="501">Ø20</text>
        <text x="194" y="523">Ø10</text>
        <text x="283" y="516">60</text>
        <text transform="translate(76 391) rotate(-90)">20</text>
        <text transform="translate(270 391) rotate(-90)">20</text>
        <text transform="translate(292 370) rotate(-90)">45</text>
      </g>
    </g>
  );
}

function Model() {
  const c = "#1414e6";
  return (
    <svg className="absolute inset-0 h-full w-full" aria-label="Drawing area">
      <defs>
        <pattern id="minor" x="16.700" y="1.800" width="21.200" height="21.200" patternUnits="userSpaceOnUse">
          <path d="M.5 0v22M0 .5h22" stroke="#262e38" />
        </pattern>
        <pattern id="major" x="59" y="23" width="106" height="106" patternUnits="userSpaceOnUse">
          <path d="M.5 0v106M0 .5h106" stroke="#333c47" />
        </pattern>
      </defs>
      <rect width="100%" height="100%" fill="url(#minor)" />
      <rect width="100%" height="100%" fill="url(#major)" />
      {/* world coordinates start at the top of the window */}
      <g transform="translate(0 -199)">
        <ReferenceSheet />
        <path d="M484.500 199v24" stroke="#1e6a2c" />
        <g fill="none" stroke="#e4e7ea">
          <path d="M497 199.500h153M548.500 202v13M624.500 202v13" strokeWidth="1.500" />
          <path d="M693 199.500h2" />
          <path d="M650 258.500H548a51 51 0 0 0 0 102h102zM548 275.500h25.500V259M548 344.500h25.500V360M548 275.500a34.500 34.500 0 0 0 0 69M641.500 259v8.500h8.500M641.500 360v-8.500h8.500" />
          <circle cx="548" cy="310" r="17" />
          <circle cx="624" cy="284.500" r="8.500" />
          <circle cx="624" cy="335.500" r="8.500" />
          <path d="M547.500 310.500h1" />
          <circle cx="541.500" cy="514" r="51" />
          <circle cx="541.500" cy="514" r="34" />
          <circle cx="541.500" cy="514" r="17" />
          <path d="M541 462.500h102.500v102H541M591.500 514v83" />
          <path d="M538 514.500h7M541.500 511v7" />
          <path d="M541.500 520v44" stroke="#9aa29a" strokeDasharray="1 3" />
        </g>
        <circle cx="540.500" cy="518" r="2" fill="#fff" />
        <circle cx="591.500" cy="518" r="2" fill="#fff" />
        <path d="M541.500 560v10M539 564.500h5" stroke="#1c9c20" />
        <path d="M591.500 560l-5 10h10z" fill="none" stroke="#1c9c20" strokeWidth="2" />
        <circle cx="591.500" cy="565" r="2" fill="#e8ffe8" />
        <path d="M592 568v16l4-3 3 6 2-1-2-6h5z" fill="#fff" stroke="#333" strokeWidth=".5" />

        <g fill="none" stroke={c} strokeWidth="1.500">
          <path d="M650 259.500h39v43M689.500 317v43H650M641.500 235v24M650.500 235v24M650 235.500h10M633 235.500h8M582 294.500h-10l-8 6M606 317.500h6l8 10" />
          <path d="M514 248.500h5l13 31M478 268.500h6l20 15" stroke="#1717b0" strokeWidth="1" />
        </g>
        <Arrow x={641} y={235} a={0} fill={c} />
        <Arrow x={650} y={235} a={180} fill={c} />
        <Arrow x={689} y={259} a={-90} fill={c} />
        <Arrow x={689} y={360} a={90} fill={c} />
        <Arrow x={533} y={280} a={66} fill={c} />
        <Arrow x={504} y={284} a={35} fill={c} />
        <Arrow x={563} y={301} a={145} fill={c} />
        <Arrow x={620} y={328} a={52} fill={c} />
        <g fill={c} stroke={c} fontFamily="Liberation Sans, Arial, sans-serif" fontSize="11" textAnchor="middle">
          <text x="677" y="239">5 X 5</text>
          <text x="500" y="252">R20</text>
          <text x="463" y="273">R30</text>
          <text x="592" y="299">Ø20</text>
          <text x="594" y="322">Ø10</text>
          <text x="688" y="314">60</text>
        </g>

        <path fillRule="evenodd" d="M1057 258.500H954a51 51 0 0 0 0 102.500h103zM954.500 294a16 16 0 1 1 0 32 16 16 0 0 1 0-32zM1031 277a7 7 0 1 1 0 14 7 7 0 0 1 0-14zM1031 328a7 7 0 1 1 0 14 7 7 0 0 1 0-14z" fill="#d8d9d2" stroke="#fff" />
        <path d="M955 275.500h25V259M955 344.500h25V360M955 275.500a34.500 34.500 0 0 0 0 69M1047.500 259v8.500h9M1047.500 360v-8.500h9" fill="none" stroke="#f6f6f2" />

        <path d="M44.500 623V581" stroke="#5fae62" strokeWidth="5" strokeLinecap="round" />
        <path d="M46 624.500h44" stroke="#c0605f" strokeWidth="5" strokeLinecap="round" />
        <path d="M41.500 566l5 6 5-6M46.500 572v5" fill="none" stroke="#2a8a36" strokeWidth="1.200" />
        <path d="M86 611l11 11M97 611l-11 11" stroke="#b53a3a" strokeWidth="1.200" />
        <path d="M42 610.500h11l-11 12h11" fill="none" stroke="#1f5fd8" strokeWidth="1.500" />
        <circle cx="44" cy="624" r="2.500" fill="#6fb1f2" />
      </g>
    </svg>
  );
}

function ViewCube() {
  return (
    <div className="absolute top-[7px] right-[18px] w-[88px]">
      <svg viewBox="0 -4 88 100" className="h-[100px] w-[88px]" fontFamily="Open Sans, sans-serif" fontSize="13" fontWeight="700" textAnchor="middle">
        <circle cx="45" cy="44" r="36" fill="none" stroke="#474d57" strokeWidth="7" />
        <path d="M29 27h33v33H29z" fill="#c4c6c8" />
        <path d="M35 34h21v20H35z" fill="#b2bac2" />
        <text x="45" y="47" fontSize="9" fill="#3a424c">TOP</text>
        <g fill="#c3c6c8">
          <text x="45" y="12">N</text>
          <text x="45" y="86">S</text>
          <text x="8" y="49">W</text>
          <text x="82" y="49">E</text>
        </g>
      </svg>
      <button className="mt-1.5 ml-3 flex h-4 w-[63px] items-center justify-between rounded-sm border border-[#b5b8c2] bg-[#9296a3] px-1 text-[10px] text-[#454a54]">
        Unnamed <Caret className="text-[#c6c9d2]" />
      </button>
    </div>
  );
}

function NavBar() {
  return (
    <div className="absolute top-[153px] right-[9px] flex h-[200px] w-[30px] items-center justify-center rounded-sm border border-[#666a70] bg-[#5b5f64]">
      <svg viewBox="0 0 30 200" className="h-full w-full" fill="none" stroke="#42474e">
        <circle cx="24" cy="5" r="3" />
        <circle cx="24" cy="194" r="3" />
        <path d="M5 28a10 10 0 0 1 10-10h10v10a10 10 0 1 1-20 0z" />
        <circle cx="15" cy="28" r="6" />
        <path d="M10 79q-4-5-6-9 3-1 6 3V62q2-2 3 0v6-9q2-2 3 0v8-7q2-2 3 0v8-5q2-2 3 0 2 9-4 16z" />
        <path d="M4 84l14 14M18 84L4 98M4 88v-4h4M14 84h4v4M4 94v4h4" />
        <circle cx="20" cy="98" r="5" />
        <path d="M23 102l4 5" strokeWidth="2" />
        <path d="M15 121v19M12 124l3-4 3 4M20 136q6-1 6-5-2-4-11-4T4 131q0 4 8 4M9 132l3 3-3 3" strokeWidth="1.500" />
        <path d="M4 159h6v6H4zM12 159h6v6h-6zM20 159h5v6h-5zM4 168h15v12H4z" />
        <path d="M9 171l5 3-5 3zM13 46h5l-2 2zM13 112h5l-2 2zM13 148h5l-2 2z" fill="#33383e" stroke="none" />
      </svg>
    </div>
  );
}

function CommandLine() {
  return (
    <div className="absolute right-[279px] bottom-0 left-[278px] flex flex-col items-start gap-1 font-['DejaVu_Sans_Mono',monospace] text-[11px]">
      <span className="ml-14 h-[15px] rounded-sm bg-[#4c5156] px-0.5 leading-[15px] text-[#adb0b3]">LINE</span>
      <span className="ml-14 h-[15px] rounded-sm bg-[#5a5d61] px-0.5 leading-[15px] text-[#e2e3e4]">Specify first point:</span>
      <div className="-mt-0.5 flex h-[25px] w-full items-center bg-white text-[#222]">
        <div className="flex h-full w-[51px] shrink-0 items-center justify-between bg-linear-to-b from-[#8a8a8a] to-[#4b4b4b] px-1">
          <svg viewBox="0 0 5 16" className="h-4 w-[5px]"><path d="M1 0v16M4 0v16" stroke="#bbb" strokeDasharray="1 2" /></svg>
          <button aria-label="Close command line"><svg viewBox="0 0 10 10" className="size-2.5"><path d="M1 1l8 8M9 1L1 9" stroke="#eee" strokeWidth="2" /></svg></button>
          <button aria-label="Customize"><svg viewBox="0 0 14 14" className="size-3.5"><path d="M13 13L6 6" stroke="#e5e5e5" strokeWidth="3" /><path d="M2 1l3 3-1 1-3-3q-1 5 4 5 3-1 2-4-1-3-5-2z" fill="#e5e5e5" stroke="#e5e5e5" /></svg></button>
        </div>
        <button aria-label="Recent commands" className="ml-1">
          <svg viewBox="0 0 24 16" className="h-4 w-6">
            <path d="M1 12h3v3H1z" fill="#b5d3f2" />
            <path d="M13 1h2v2h-2z" fill="#bbb" />
            <path d="M17 6h6l-3 4z" fill="#888" />
          </svg>
        </button>
        <label htmlFor="command" className="ml-1.5 font-bold">LINE</label>
        <span className="ml-1 whitespace-pre">Specify next point or [<button className="rounded-sm bg-[#cfcfcf] text-[#2a2f45]"><span className="text-[#2f3fc0]">U</span>ndo</button>]:</span>
        <input id="command" className="ml-1 h-full min-w-0 flex-1 outline-none" />
        <button aria-label="Show history" className="mr-1"><svg viewBox="0 0 6 4" className="h-1 w-1.5"><path d="M0 4h6L3 0z" fill="#222" /></svg></button>
      </div>
    </div>
  );
}

function Canvas() {
  return (
    <main className="relative flex flex-1 overflow-hidden bg-[#232b35]">
      <Model />
      <p className="absolute top-[5px] left-0 text-[11px] leading-[15px] text-[#dcdfe2]">[−][Top][Conceptual]</p>
      <div className="absolute top-[311px] left-[542px] flex h-[18px] w-[46px] items-center border border-[#999] bg-white pl-1">
        <input aria-label="Length" defaultValue="15" className="w-[13px] text-[11px] text-[#222] outline-none" />
        <span className="h-3 w-px bg-[#222]" />
      </div>
      <span className="absolute top-[327px] left-[571px] flex h-[18px] w-[22px] items-center border border-[#444] bg-[#8c8e90] pl-1 text-[11px] text-[#222]">0°</span>
      <div className="absolute top-[385px] left-[607px] flex h-5 w-[136px] items-center justify-between border-2 border-[#3a3d41] bg-[#9a9b9c] px-0.5 text-[11px] text-[#1f1f1f]">
        Specify next point or
        <svg viewBox="0 0 10 10" className="size-2.5"><path d="M0 0h10v10H0z" fill="#fff" stroke="#334" strokeWidth="2" /><path d="M5 3v4M3 5h4" stroke="#223" /></svg>
      </div>
      <ViewCube />
      <NavBar />
      <CommandLine />
      <div className="relative ml-auto flex w-[5px] flex-col bg-[#a9c5e6]">
        <div className="h-[86px] bg-[#dce8f5]" />
      </div>
    </main>
  );
}

function Group({ items, width }: { items: string[]; width: string }) {
  return (
    <div className={`flex h-[25px] shrink-0 items-center justify-around border border-[#777] bg-[#505050] ${width}`}>
      {items.map((n, i) =>
        n === "v" ? <SmallCaretWide key={i} /> : (
          <button key={i} aria-label={n}>{icons[n] ? <Icon name={n} /> : n}</button>
        ),
      )}
    </div>
  );
}

function SmallCaretWide() {
  return (
    <svg viewBox="0 0 8 5" className="h-1 w-1.5 shrink-0" aria-hidden="true">
      <path d="M0 0h8L4 5z" fill="#fff" />
    </svg>
  );
}

function StatusBar() {
  return (
    <footer className="flex h-[27px] shrink-0 items-center bg-[#3a3a3a] text-[11px] text-[#f0f0f0]">
      <div className="flex h-full items-start pl-[9px]">
        <button className="h-[18px] w-[54px] rounded-b-lg bg-[#6e6e6e] font-bold text-white [clip-path:polygon(0_0,100%_0,46px_100%,6px_100%)]">Model</button>
        <button className="h-[18px] w-[89px] rounded-b-lg bg-[#505050] text-[#b0b0b0] [clip-path:polygon(0_0,100%_0,82px_100%,6px_100%)]">Présentation1</button>
        <button className="h-[18px] w-[90px] rounded-b-lg bg-[#505050] text-[#b0b0b0] [clip-path:polygon(0_0,100%_0,82px_100%,6px_100%)]">Présentation2</button>
        <button aria-label="New layout" className="ml-0.5 flex h-4 w-[22px] items-center justify-center rounded-b-lg bg-[#505050]">
          <svg viewBox="0 0 8 8" className="size-2"><path d="M4 0v8M0 4h8" stroke="#ccc" strokeWidth="2" /></svg>
        </button>
      </div>
      <div className="ml-auto flex shrink-0">
        <Group items={["MODEL"]} width="w-[47px]" />
        <Group items={["gridOn", "snap", "v"]} width="w-[62px]" />
        <Group items={["dynInput"]} width="w-6" />
        <Group items={["ortho", "polar", "v", "iso", "v"]} width="w-[98px]" />
        <Group items={["track", "osnap", "v"]} width="w-[62px]" />
        <Group items={["annoOn", "annoAuto", "anno", "1:1", "v"]} width="w-[101px]" />
        <Group items={["gear", "v"]} width="w-[38px]" />
        <Group items={["plus"]} width="w-[25px]" />
        <Group items={["ruler", "Decimal", "v"]} width="w-[92px]" />
        <Group items={["calc"]} width="w-[25px]" />
        <Group items={["lockUi", "v"]} width="w-[38px]" />
        <Group items={["isolate"]} width="w-[26px]" />
        <Group items={["hardware"]} width="w-[25px]" />
        <Group items={["trust"]} width="w-6" />
        <Group items={["fullscreen", "burger"]} width="w-[46px]" />
      </div>
    </footer>
  );
}

export default function App() {
  return (
    <div className="flex min-h-screen flex-col overflow-hidden bg-black pt-[18px] pb-5 font-['Open_Sans',sans-serif]">
      <TitleBar />
      <Ribbon />
      <FileTabs />
      <Canvas />
      <StatusBar />
    </div>
  );
}
